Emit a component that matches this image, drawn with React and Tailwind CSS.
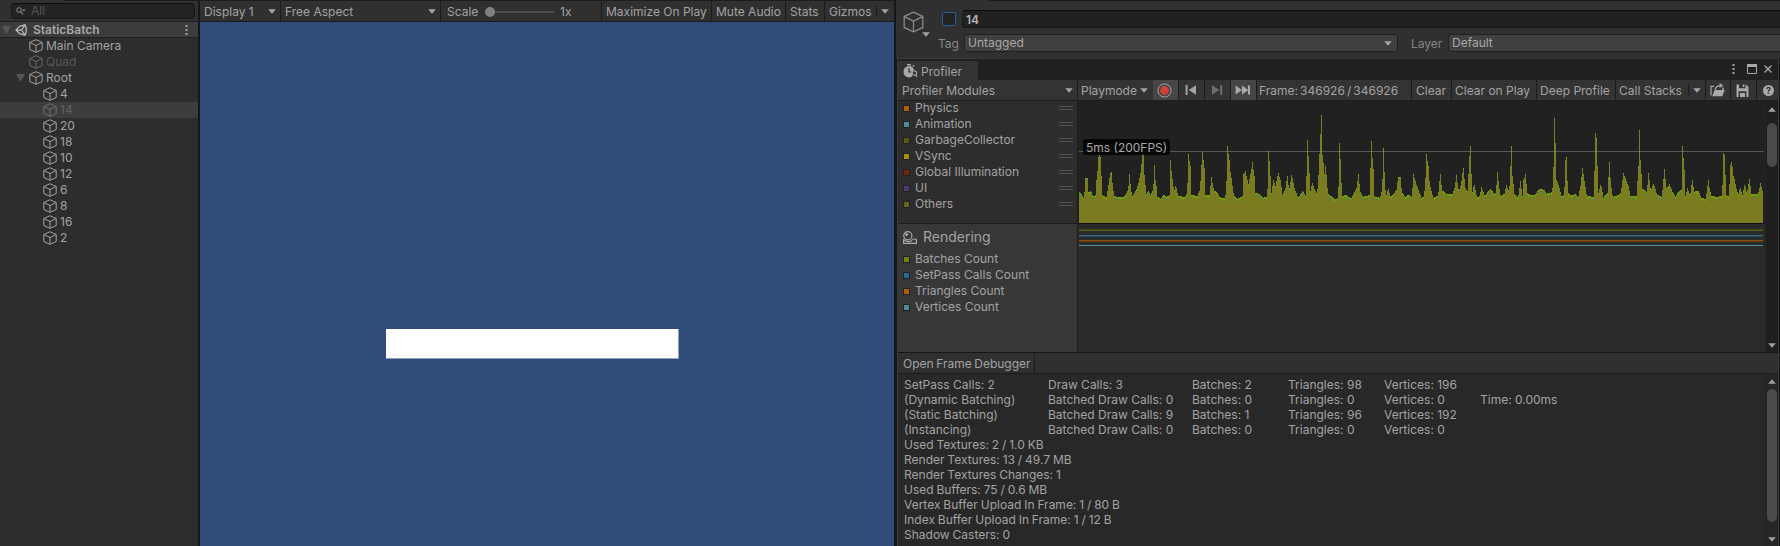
const Caret = ({ className = '', color = '#a3a3a3' }) => (
  <svg className={`shrink-0 ${className}`} width="8" height="5" viewBox="0 0 8 5">
    <path d="M0.2 0.2h7.6L4 4.8z" fill={color} />
  </svg>
);

const UpCaret = () => (
  <svg width="8" height="5" viewBox="0 0 8 5">
    <path d="M0.2 4.8h7.6L4 0.2z" fill="#a3a3a3" />
  </svg>
);

const Fold = () => (
  <svg className="shrink-0" width="9" height="8" viewBox="0 0 9 8">
    <path d="M0 0h9L4.5 8z" fill="#555555" />
  </svg>
);

const Cube = ({ size = 14, h = 14, color = '#a3a3a3', stroke = 1 }) => (
  <svg className="shrink-0" width={size} height={h} viewBox="0 0 14 14" preserveAspectRatio="none">
    <path
      d="M7 0.7L13.2 3.5V10.5L7 13.3L0.8 10.5V3.5ZM0.8 3.5L7 6.5L13.2 3.5M7 6.5V13.3"
      fill="none"
      stroke={color}
      strokeWidth={stroke}
      strokeLinejoin="round"
    />
  </svg>
);

const Dots = () => (
  <svg className="shrink-0" width="3" height="10" viewBox="0 0 3 10">
    <path d="M0.5 0h2v2h-2zM0.5 4h2v2h-2zM0.5 8h2v2h-2z" fill="#a3a3a3" />
  </svg>
);

const Label = ({ children, className = '' }) => <span className={`pt-[2px] ${className}`}>{children}</span>;

/* ---------- Hierarchy ---------- */

const children = ['4', '14', '20', '18', '10', '12', '6', '8', '16', '2'];

function Hierarchy() {
  return (
    <aside className="flex w-[198px] shrink-0 flex-col bg-[#2d2d2d]">
      <div className="flex h-[22px] flex-col border-b border-[#1c1c1c] bg-[#303030]">
        <div className="ml-[63px] h-px shrink-0 bg-[#1a1a1a]" />
        <div className="ml-[11px] mr-[3px] mt-[2px] flex h-4 items-center rounded-[4px] border border-[#191919] border-t-[#0d0d0d] bg-[#232323] pl-1">
          <svg width="10" height="9" viewBox="0 0 10 9">
            <circle cx="3" cy="3" r="2.3" fill="none" stroke="#8a8a8a" />
            <path d="M4.7 4.7L7 7.3" stroke="#8a8a8a" strokeWidth="1.2" />
            <path d="M6 2.6h3.6L7.8 4.6z" fill="#8a8a8a" />
          </svg>
          <span className="ml-[5px] text-[#585858]">All</span>
        </div>
      </div>
      <div className="flex h-4 shrink-0 items-center border-b border-[#1f1f1f] bg-[#3c3c3c] pl-[2px]">
        <Fold />
        <svg className="ml-1 shrink-0" width="13" height="12" viewBox="0 0 13 12">
          <path
            d="M8.2 1.4L4.6 2.4L1 6L4.6 9.6L8.2 10.6M10.2 0.9L11.4 5L10.9 6L11.4 7L10.2 11.1M6.6 6L10 0.9M6.6 6L10 11.1M6.6 6H1.6M8 1.2L10.6 0.8M8 10.8L10.6 11.2"
            fill="none"
            stroke="#bcbcbc"
            strokeWidth="1.25"
          />
        </svg>
        <span className="ml-[5px] font-semibold text-[#a8a8a8]">StaticBatch</span>
        <span className="ml-auto mr-[10px] flex"><Dots /></span>
      </div>
      <div className="flex h-4 items-center gap-[3px] pl-[29px]"><Cube />Main Camera</div>
      <div className="flex h-4 items-center gap-[3px] pl-[29px] text-[#575757]"><Cube color="#686868" />Quad</div>
      <div className="flex h-4 items-center pl-4">
        <Fold />
        <span className="ml-1 flex items-center gap-[3px]"><Cube />Root</span>
      </div>
      {children.map((name) =>
        name === '14' ? (
          <div key={name} className="flex h-4 items-center gap-[3px] bg-[#3d3d3d] pl-[43px] text-[#606060]">
            <Cube color="#707070" />{name}
          </div>
        ) : (
          <div key={name} className="flex h-4 items-center gap-[3px] pl-[43px]"><Cube />{name}</div>
        )
      )}
    </aside>
  );
}

/* ---------- Game view ---------- */

function GameView() {
  return (
    <main className="flex w-[694px] shrink-0 flex-col bg-[#304d79]">
      <div className="flex h-[22px] shrink-0 border-y border-[#1c1c1c] bg-[#303030]">
        <div className="flex w-[81px] items-center justify-between border-r border-[#1c1c1c] pl-1 pr-1"><Label>Display 1</Label><Caret /></div>
        <div className="flex w-[160px] items-center justify-between border-r border-[#1c1c1c] pl-1 pr-1"><Label>Free Aspect</Label><Caret /></div>
        <div className="flex w-[161px] items-center border-r border-[#1c1c1c] pl-[6px]">
          <Label className="w-[38px]">Scale</Label>
          <span className="mt-px size-[10px] rounded-full bg-[#808080]" />
          <span className="mt-px h-[2px] w-[59px] bg-[#4c4c4c]" />
          <Label className="ml-[6px]">1x</Label>
        </div>
        <div className="flex w-[110px] items-center border-r border-[#1c1c1c] pl-1"><Label>Maximize On Play</Label></div>
        <div className="flex w-[74px] items-center border-r border-[#1c1c1c] pl-1"><Label>Mute Audio</Label></div>
        <div className="flex w-[39px] items-center border-r border-[#1c1c1c] pl-1"><Label>Stats</Label></div>
        <div className="flex grow items-center justify-between pl-1 pr-[5px]">
          <Label>Gizmos</Label>
          <span className="flex items-center gap-1"><i className="h-3 w-px bg-[#1c1c1c]" /><Caret /></span>
        </div>
      </div>
      <div className="ml-[186px] mt-[307px] h-[30px] w-[293px] border-b border-r border-[#93a2b8] bg-white" />
    </main>
  );
}

/* ---------- Inspector ---------- */

function Inspector() {
  return (
    <div className="flex h-[58px] shrink-0 flex-col bg-[#303030]">
      <div className="ml-[93px] h-px shrink-0 bg-[#1a1a1a]" />
      <div className="flex grow">
        <div className="flex w-[40px] shrink-0 items-start pl-[7px] pt-[10px]">
          <Cube size={21} h={22} color="#858585" stroke={0.9} />
          <span className="-ml-[2px] mt-[21px]"><Caret /></span>
        </div>
        <div className="flex min-w-0 grow flex-col pt-[9px]">
          <div className="flex h-[18px] items-center">
            <span className="ml-[6px] size-[14px] shrink-0 rounded-[2px] border border-[#275f96] bg-[#232323]" />
            <span className="ml-[6px] flex h-[18px] grow items-center rounded-l-[3px] border border-r-0 border-[#191919] border-t-[#0a0a0a] bg-[#212121] pl-[3px] font-semibold text-[#b4b4b4]"><Label>14</Label></span>
          </div>
          <div className="mt-[6px] flex h-[18px] items-center">
            <Label className="w-[28px] pl-[2px] text-[#868686]">Tag</Label>
            <span className="flex h-[18px] w-[434px] items-center justify-between rounded-[3px] border border-[#222222] bg-[#404040] pl-[3px] pr-[5px] text-[#a8a8a8]">Untagged<Caret /></span>
            <Label className="ml-[13px] w-[37px] text-[#868686]">Layer</Label>
            <span className="flex h-[18px] grow items-center rounded-l-[3px] border border-r-0 border-[#222222] bg-[#404040] pl-[3px] text-[#a8a8a8]">Default</span>
          </div>
        </div>
      </div>
    </div>
  );
}

/* ---------- Profiler ---------- */

const cpuRows = [
  ['Physics', '#b05c05'],
  ['Animation', '#468e98'],
  ['GarbageCollector', '#5a5a0f'],
  ['VSync', '#ab8a0a'],
  ['Global Illumination', '#782208'],
  ['UI', '#503a6e'],
  ['Others', '#66661a'],
];

const renderRows = [
  ['Batches Count', '#6b860a'],
  ['SetPass Calls Count', '#226d8e'],
  ['Triangles Count', '#b05c05'],
  ['Vertices Count', '#468e98'],
];

/* Frame time samples as [x, height] pairs, three units to a pixel. */
const earlySamples = [
  [0, 94], [9, 85], [13, 74], [17, 101], [20, 134], [24, 135], [27, 94], [36, 95], [42, 80], [49, 84], [53, 128], [58, 198], [61, 240], [65, 198], [69, 83], [82, 78], [86, 100], [93, 150], [98, 152], [101, 106], [106, 80], [127, 78], [137, 80], [147, 100], [151, 146], [154, 116], [159, 78], [167, 90], [177, 116], [184, 150], [190, 206], [194, 210], [197, 144], [201, 84], [207, 98], [214, 84], [222, 98], [226, 174], [230, 130], [235, 79], [245, 72], [254, 86], [263, 78], [271, 84], [274, 190], [278, 155], [282, 110], [286, 98], [290, 114], [297, 82], [317, 78], [324, 90], [328, 208], [333, 170], [337, 83], [355, 82], [362, 100], [368, 174], [371, 212], [375, 165], [379, 85], [391, 84], [397, 138], [404, 98], [413, 94], [420, 78], [436, 74], [441, 90], [445, 232], [450, 190], [456, 136], [464, 84], [475, 73], [490, 80], [494, 146], [498, 156], [508, 118], [515, 148], [520, 184], [525, 142], [528, 90], [540, 88], [551, 76], [562, 78], [566, 110], [569, 216], [574, 142], [577, 90], [583, 130], [589, 111], [597, 150], [604, 130], [610, 84], [618, 98], [624, 140], [630, 100], [638, 144], [646, 104], [657, 76], [671, 96], [679, 80], [683, 140], [686, 250], [690, 150], [693, 90], [699, 122], [707, 99], [714, 86], [718, 145], [724, 267], [728, 325], [731, 205], [736, 146], [740, 172], [746, 90], [765, 72], [777, 74], [782, 240], [787, 120], [790, 80], [801, 86], [816, 72], [832, 104], [838, 147], [843, 96], [851, 78], [871, 84], [877, 247], [882, 162], [886, 80], [903, 76], [909, 100], [913, 225], [918, 104], [922, 84], [927, 104], [935, 78], [945, 90], [952, 98], [957, 138], [963, 137], [969, 90], [979, 79], [989, 86], [998, 78], [1003, 146], [1011, 118], [1019, 96], [1027, 75],
];

/* Same units, measured from LATE_START. */
const LATE_START = 1023;
const lateSamples = [
  [11, 80], [15, 110], [19, 208], [24, 170], [29, 115], [39, 75], [54, 82], [60, 148], [66, 98], [80, 87], [97, 88], [105, 110], [108, 145], [116, 97], [122, 112], [129, 166], [136, 105], [143, 94], [147, 200], [151, 232], [156, 88], [162, 118], [170, 80], [177, 76], [184, 108], [194, 82], [210, 102], [225, 86], [228, 100], [232, 154], [237, 106], [242, 80], [253, 88], [259, 114], [267, 92], [274, 231], [278, 140], [283, 86], [294, 78], [301, 126], [307, 80], [311, 128], [316, 146], [322, 90], [330, 84], [344, 84], [357, 102], [373, 100], [378, 88], [395, 92], [399, 120], [403, 314], [407, 240], [410, 128], [417, 110], [424, 80], [432, 86], [437, 190], [440, 198], [443, 92], [453, 83], [466, 87], [474, 76], [481, 110], [487, 166], [494, 120], [500, 82], [521, 78], [526, 270], [530, 256], [534, 86], [542, 118], [550, 76], [562, 90], [568, 184], [572, 120], [578, 78], [590, 82], [602, 90], [610, 150], [625, 110], [631, 82], [650, 80], [654, 170], [658, 280], [662, 190], [666, 102], [674, 100], [680, 90], [685, 150], [692, 98], [701, 120], [710, 86], [725, 78], [733, 162], [739, 104], [748, 116], [756, 96], [766, 78], [776, 96], [784, 100], [788, 231], [792, 160], [796, 80], [802, 104], [810, 82], [816, 130], [823, 94], [835, 96], [843, 76], [857, 72], [864, 128], [868, 106], [874, 82], [889, 78], [906, 82], [910, 210], [914, 205], [918, 84], [926, 80], [931, 174], [935, 182], [941, 142], [950, 98], [955, 88], [960, 108], [967, 84], [974, 120], [980, 88], [988, 132], [994, 88], [1014, 88], [1021, 120], [1027, 96],
];
const samples = [...earlySamples, ...lateSamples.map(([x, h]) => [x + LATE_START, h])];

const frames = Array.from({ length: 684 }, (_, i) => {
  const x = i * 3 + 1;
  let k = 0;
  while (k < samples.length - 2 && samples[k + 1][0] < x) k++;
  const [x0, h0] = samples[k];
  const [x1, h1] = samples[k + 1];
  const t = Math.min(1, Math.max(0, (x - x0) / (x1 - x0)));
  const near = samples.find((s) => Math.abs(s[0] - x) <= 1 && s[1] > 125);
  return Math.round((near ? near[1] : h0 + (h1 - h0) * t) / 3);
});

const usagePath = frames.map((h, i) => `M${i} ${122 - h}h1v${h}h-1z`).join('');
const capHeight = (h, i) => ((i * 7) % 5 < 3 ? 2 : 3) - (h > 32 ? 1 : 0);
const renderPath = frames.map((h, i) => `M${i} ${122 - h}h1v${capHeight(h, i)}h-1z`).join('');
const scriptPath = frames
  .map((h, i) => ((i * 13 + h * 5) % 7 < 4 ? `M${i} ${124 - h}h1v1h-1z` : ''))
  .join('');

function UsageChart() {
  return (
    <svg className="ml-px block" width="685" height="122" viewBox="0 0 685 122" shapeRendering="crispEdges">
      <path d={usagePath} fill="#7b7b1f" />
      <path d={renderPath} fill="#79990b" />
      <path d={scriptPath} fill="#3f7f62" />
      <path d="M0 50h685v1h-685z" fill="#a0a0a0" fillOpacity="0.42" />
    </svg>
  );
}

function ScrollBar({ thumb, className }) {
  return (
    <div className={`flex w-[13px] shrink-0 flex-col items-center border-l border-[#242424] ${className}`}>
      <UpCaret />
      <span className={`w-[10px] rounded-full bg-[#4a4a4a] ${thumb}`} />
      <span className="mt-auto flex"><Caret /></span>
    </div>
  );
}

function Legend({ rows, handles }) {
  return rows.map(([label, color]) => (
    <div key={label} className="flex h-4 items-center pl-[5px] pr-1">
      <span className="mr-[5px] size-[7px] border border-[#222222]" style={{ backgroundColor: color }} />
      {label}
      {handles && <span className="ml-auto h-1 w-[14px] border-y border-[#505050]" />}
    </div>
  ));
}

function ProfilerToolbar() {
  return (
    <div className="flex h-[21px] shrink-0 border-b border-[#1c1c1c] bg-[#333333]">
      <div className="flex w-[180px] items-center justify-between border-r border-[#1c1c1c] pl-1 pr-1"><Label>Profiler Modules</Label><Caret /></div>
      <div className="flex w-[75px] items-center justify-between pl-[3px] pr-[5px]"><Label>Playmode</Label><Caret /></div>
      <div className="flex w-[26px] items-center border-r border-[#1c1c1c] bg-[#464646] pl-[4px]">
        <svg width="15" height="15" viewBox="0 0 15 15">
          <circle cx="7.5" cy="7.5" r="6.6" fill="none" stroke="#a3a3a3" />
          <circle cx="7.5" cy="7.5" r="4.4" fill="#d2403a" />
        </svg>
      </div>
      <div className="flex w-[26px] items-center border-r border-[#1c1c1c] pl-[6px]">
        <svg width="12" height="12" viewBox="0 0 12 12">
          <path d="M0.6 1h2v10h-2zM11 1.2v9.6L3.6 6z" fill="#a3a3a3" />
        </svg>
      </div>
      <div className="flex w-[26px] items-center border-r border-[#1c1c1c] pl-[6px]">
        <svg width="12" height="12" viewBox="0 0 12 12">
          <path d="M1 1.2v9.6L8.4 6z" fill="#6e6e6e" />
          <path d="M9.2 1h2v10h-2z" fill="#6e6e6e" />
        </svg>
      </div>
      <div className="flex w-[26px] items-center border-r border-[#1c1c1c] bg-[#464646] pl-1">
        <svg width="16" height="10" viewBox="0 0 16 10">
          <path d="M0.6 0.4v9.2L7 5zM7 0.4v9.2L13.4 5zM13 0.4h2v9.2h-2z" fill="#a9a9a9" />
        </svg>
      </div>
      <div className="flex w-[155px] items-center border-r border-[#1c1c1c] pl-[2px] [word-spacing:-1.3px]"><Label>Frame: 346926 / 346926</Label></div>
      <div className="flex w-10 items-center border-r border-[#1c1c1c] pl-1"><Label>Clear</Label></div>
      <div className="flex w-[85px] items-center border-r border-[#1c1c1c] pl-[3px]"><Label>Clear on Play</Label></div>
      <div className="flex w-[79px] items-center border-r border-[#1c1c1c] pl-[3px]"><Label>Deep Profile</Label></div>
      <div className="flex w-[90px] items-center justify-between border-r border-[#1c1c1c] pl-[3px] pr-1">
        <Label>Call Stacks</Label>
        <span className="flex items-center gap-1"><i className="h-3 w-px bg-[#1c1c1c]" /><Caret /></span>
      </div>
      <div className="flex w-[25px] items-center border-r border-[#1c1c1c] pl-1">
        <svg width="15" height="14" viewBox="0 0 15 14">
          <path d="M1 12.6V3.4h3" fill="none" stroke="#a9a9a9" strokeWidth="1.2" />
          <path d="M2.2 13.2L4.6 7h10l-2.2 6.2z" fill="#a9a9a9" />
          <path d="M9.6 0l3.6 2.5L9.6 5z" fill="#a9a9a9" />
          <path d="M5.2 6.6Q6 2.6 10.6 2.6M13 4.6v2.4" fill="none" stroke="#a9a9a9" strokeWidth="1.4" />
        </svg>
      </div>
      <div className="flex w-[26px] items-center border-r border-[#1c1c1c] pl-[5px]">
        <svg width="13" height="13" viewBox="0 0 13 13">
          <path d="M0.5 0.5H3v3.7h6.6V0.5H10L12.5 3v10H10.4V7.2H2.6V13H0.5zM6.8 0.5h1.6v2.6H6.8zM4 9h5v4H4z" fill="#a9a9a9" />
        </svg>
      </div>
      <div className="flex grow items-center pl-[6px]">
        <span className="flex size-[11px] items-center justify-center rounded-full bg-[#a9a9a9] text-[9px] font-bold leading-none text-[#303030]">?</span>
      </div>
    </div>
  );
}

const batchStats = [
  ['SetPass Calls: 2', 'Draw Calls: 3', 'Batches: 2', 'Triangles: 98', 'Vertices: 196', ''],
  ['(Dynamic Batching)', 'Batched Draw Calls: 0', 'Batches: 0', 'Triangles: 0', 'Vertices: 0', 'Time: 0.00ms'],
  ['(Static Batching)', 'Batched Draw Calls: 9', 'Batches: 1', 'Triangles: 96', 'Vertices: 192', ''],
  ['(Instancing)', 'Batched Draw Calls: 0', 'Batches: 0', 'Triangles: 0', 'Vertices: 0', ''],
];

const memoryStats = [
  'Used Textures: 2 / 1.0 KB',
  'Render Textures: 13 / 49.7 MB',
  'Render Textures Changes: 1',
  'Used Buffers: 75 / 0.6 MB',
  'Vertex Buffer Upload In Frame: 1 / 80 B',
  'Index Buffer Upload In Frame: 1 / 12 B',
  'Shadow Casters: 0',
];

function Profiler() {
  return (
    <section className="ml-px flex min-h-0 w-[882px] grow flex-col border-x border-t border-[#3a3a3a] bg-[#282828]">
      <div className="flex h-[21px] shrink-0 items-end bg-[#202020]">
        <div className="flex h-[19px] w-[80px] items-center rounded-t-[2px] bg-[#333333] pl-[5px]">
          <svg width="15" height="14" viewBox="0 0 15 14">
            <path d="M4 0h4v1.6H4zM9.3 2l1.3-1.2 1 1-1.2 1.3z" fill="#a9a9a9" />
            <path d="M0.6 7.4a5.3 5.3 0 0 1 10.2-2L9.2 8v4.2A5.3 5.3 0 0 1 0.6 7.4" fill="#a9a9a9" />
            <path d="M6 4v4h2.4" fill="none" stroke="#333333" strokeWidth="1.2" />
            <circle cx="11.4" cy="9" r="2.2" fill="#333333" stroke="#a9a9a9" strokeWidth="1.1" />
            <path d="M12.6 10.8L14 13" stroke="#a9a9a9" strokeWidth="1.2" />
          </svg>
          <Label className="ml-[3px]">Profiler</Label>
        </div>
        <div className="ml-auto mb-[6px] flex items-center pr-[6px]">
          <Dots />
          <svg className="ml-[12px]" width="10" height="10" viewBox="0 0 10 10">
            <path d="M0.5 0.5h9v9h-9z" fill="none" stroke="#a9a9a9" />
            <path d="M0 0h10v3H0z" fill="#a9a9a9" />
          </svg>
          <svg className="ml-[7px]" width="8" height="8" viewBox="0 0 8 8">
            <path d="M0.5 0.5l7 7M7.5 0.5l-7 7" stroke="#a9a9a9" strokeWidth="1.4" />
          </svg>
        </div>
      </div>
      <ProfilerToolbar />
      <div className="flex h-[252px] shrink-0 border-b border-[#161616]">
        <div className="flex w-[180px] shrink-0 flex-col border-r border-[#1c1c1c]">
          <div className="flex h-[123px] shrink-0 flex-col justify-end overflow-hidden border-b border-[#1c1c1c] bg-[#2d2d2d] pb-[11px]">
            <Legend rows={cpuRows} handles />
          </div>
          <div className="grow bg-[#373737]">
            <div className="flex h-[27px] items-center pl-[5px] text-[14px]">
              <svg width="14" height="13" viewBox="0 0 14 13">
                <circle cx="4.8" cy="4.8" r="4.1" fill="none" stroke="#a9a9a9" strokeWidth="1.2" />
                <circle cx="3.6" cy="3.4" r="1.5" fill="#a9a9a9" />
                <path d="M0.6 8v4.3h12.8V8.4Q9.6 7.2 8.6 9.6Q6 12 0.6 9" fill="none" stroke="#a9a9a9" strokeWidth="1.2" />
              </svg>
              <span className="ml-[6px] pb-px">Rendering</span>
            </div>
            <Legend rows={renderRows} />
          </div>
        </div>
        <div className="flex min-w-0 grow flex-col">
          <div className="relative h-[123px] border-b border-[#0f0f0f] bg-[#212121]">
            <UsageChart />
            <span className="absolute left-[5px] top-[38px] flex h-4 items-center rounded-[3px] bg-black/80 px-[3px] pt-[2px] text-[#a8a8a8]">5ms (200FPS)</span>
          </div>
          <div className="flex grow flex-col bg-[#2a2a2a] pl-px pt-[5px]">
            <span className="h-[2px] w-[684px] border-t border-[#41451f] bg-[#5b611c]" />
            <span className="mt-1 h-[2px] w-[684px] border-b border-[#2a4450] bg-[#2f6a80]" />
            <span className="mt-[3px] h-[2px] w-[684px] border-b border-[#603b16] bg-[#8a5012]" />
            <span className="mt-[3px] h-px w-[684px] bg-[#50959a]" />
          </div>
        </div>
        <ScrollBar className="bg-[#1f1f1f] pb-[4px] pt-[6px]" thumb="mt-[11px] h-[44px]" />
      </div>
      <div className="flex h-[21px] shrink-0 border-b border-[#1c1c1c] bg-[#303030]">
        <div className="flex w-[137px] items-center border-r border-[#1c1c1c] pl-[5px] [word-spacing:-0.8px]"><Label>Open Frame Debugger</Label></div>
      </div>
      <div className="flex grow">
        <div className="grow pl-[6px] pt-[3px] leading-[15px]">
          {batchStats.map((row) => (
            <div key={row[0]} className="grid h-[15px] grid-cols-[144px_144px_96px_96px_96px_1fr]">
              {row.map((cell, i) => <span key={i}>{cell}</span>)}
            </div>
          ))}
          {memoryStats.map((line) => <div key={line} className="h-[15px] [word-spacing:-0.5px]">{line}</div>)}
        </div>
        <ScrollBar className="bg-[#262626] pb-1 pt-[5px]" thumb="mt-[5px] h-[133px]" />
      </div>
    </section>
  );
}

export default function App() {
  return (
    <div className="flex h-[546px] w-[1780px] gap-[2px] overflow-hidden whitespace-nowrap bg-[#161616] font-['Inter',sans-serif] text-[12px] leading-4 text-[#a3a3a3]">
      <Hierarchy />
      <GameView />
      <div className="flex min-w-0 grow flex-col">
        <Inspector />
        <Profiler />
      </div>
    </div>
  );
}
